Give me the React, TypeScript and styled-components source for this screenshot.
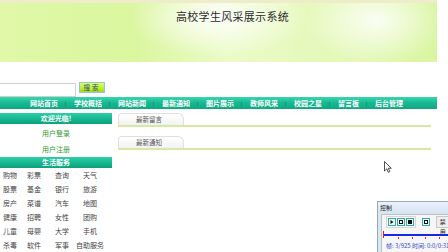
import React from 'react';
import styled, { createGlobalStyle } from 'styled-components';

const GlobalStyle = createGlobalStyle`
  html, body {
    margin: 0;
    padding: 0;
    background: #fff;
    overflow: hidden;
  }
  body {
    font-family: "Noto Sans CJK SC", "Liberation Sans", sans-serif;
  }
`;

const Page = styled.div`
  position: relative;
  width: 448px;
  height: 252px;
  overflow: hidden;
`;

const Banner = styled.header`
  width: 437px;
  height: 62px;
  border-top: 3px solid #efecc9;
  box-sizing: border-box;
  background:
    radial-gradient(ellipse 90px 40px at 50% 25%, rgba(255, 255, 255, 0.95), rgba(255, 255, 255, 0) 100%),
    radial-gradient(ellipse 70px 45px at 86% 30%, rgba(255, 255, 255, 0.85), rgba(255, 255, 255, 0) 100%),
    linear-gradient(90deg, #e0f8a8 0%, #daf69e 30%, #eafbc6 52%, #e4f8b8 78%, #d8f6a0 100%);
  display: flex;
  justify-content: center;
  padding-top: 6px;
`;

const Title = styled.h1`
  margin: 0 0 0 28px;
  font-size: 11px;
  font-weight: normal;
  letter-spacing: 0.3px;
  color: #2b2b2b;
  line-height: 14px;
`;

const SearchRow = styled.div`
  display: flex;
  align-items: flex-start;
  gap: 3px;
  margin-top: 20px;
  height: 15px;
`;

const SearchInput = styled.div`
  width: 78px;
  height: 14px;
  margin-left: -2px;
  margin-top: 1px;
  border: 1px solid #cfcfcf;
  box-sizing: border-box;
  background: #fff;
`;

const SearchButton = styled.button`
  width: 26px;
  height: 11px;
  padding: 0;
  border: 1px solid #8cc8dc;
  background: linear-gradient(180deg, #e0fb6c 0%, #bcec30 60%, #a6d81c 100%);
  font-family: inherit;
  font-size: 6.5px;
  line-height: 9px;
  color: #2a4a80;
  letter-spacing: 2px;
`;

const NavBar = styled.nav`
  width: 437px;
  height: 12px;
  background: linear-gradient(180deg, #3ad6ae 0%, #18bb93 45%, #0fa682 100%);
  display: flex;
  align-items: center;
  padding-left: 22px;
  box-sizing: border-box;
`;

const NavItem = styled.span<{ $last?: boolean }>`
  position: relative;
  padding: 0 8px;
  font-size: 7px;
  line-height: 12px;
  font-weight: bold;
  color: #fff;
  white-space: nowrap;

  &::after {
    content: '';
    display: ${({ $last }) => ($last ? 'none' : 'block')};
    position: absolute;
    right: 0;
    top: 5px;
    width: 1px;
    height: 4px;
    background: rgba(0, 95, 70, 0.35);
  }
`;

const Main = styled.div`
  display: flex;
  margin-top: 4px;
`;

const Side = styled.aside`
  width: 112px;
`;

const SideHeader = styled.div`
  height: 11px;
  background: linear-gradient(180deg, #2ccfa6 0%, #14b68e 55%, #0ea07e 100%);
  color: #fff;
  font-size: 7px;
  font-weight: bold;
  line-height: 11px;
  text-align: center;
`;

const UserLinks = styled.div`
  padding-top: 1px;
`;

const UserLink = styled.div`
  height: 16px;
  line-height: 16px;
  font-size: 7px;
  color: #2e9a2e;
  text-align: center;
`;

const ServiceGrid = styled.div`
  display: grid;
  grid-template-columns: 20px 28px 28px 28px;
  grid-auto-rows: 14px;
  justify-items: center;
  align-items: center;
`;

const ServiceItem = styled.span`
  font-size: 7px;
  color: #444;
  white-space: nowrap;
`;

const Content = styled.section`
  margin-left: 6px;
  width: 313px;
`;

const Panel = styled.div`
  margin-bottom: 9px;
`;

const Tab = styled.div`
  width: 66px;
  height: 12px;
  box-sizing: border-box;
  border: 1px solid #e0e0e0;
  border-bottom: none;
  border-radius: 4px 6px 0 0;
  background: linear-gradient(180deg, #ffffff 0%, #f2f2f2 100%);
  font-size: 6.5px;
  line-height: 11px;
  color: #555;
  text-align: center;
  padding-right: 4px;
`;

const TabLine = styled.div`
  height: 2px;
  background: #d6e8a4;
`;

const Cursor = styled.svg`
  position: absolute;
  left: 384px;
  top: 161px;
`;

const ControlWindow = styled.div`
  position: absolute;
  left: 377px;
  top: 201px;
  width: 80px;
  height: 60px;
  border: 1px solid #9aa8b8;
  background: #dbe6f3;
  box-sizing: border-box;
`;

const ControlTitle = styled.div`
  height: 12px;
  line-height: 12px;
  padding-left: 2px;
  font-size: 6px;
  color: #222;
  background: linear-gradient(180deg, #eaf1fa, #d6e3f2);
`;

const ControlBody = styled.div`
  margin-left: 3px;
  border: 1px solid #b8c2cc;
  background: #f6f6f6;
  height: 40px;
  padding: 1px 0 0 4px;
  box-sizing: border-box;
`;

const ButtonRow = styled.div`
  display: flex;
  align-items: center;
  gap: 6px;
`;

const ButtonGroup = styled.div`
  display: flex;
  gap: 1px;
  padding: 1px;
  border: 1px solid #d8d8d8;
`;

const CtrlButton = styled.div`
  width: 8px;
  height: 8px;
  box-sizing: border-box;
  border: 1px solid #3aa8a0;
  background: #e6f6f4;
  display: flex;
  align-items: center;
  justify-content: center;
`;

const TextButton = styled.div`
  height: 10px;
  padding: 0 3px;
  border: 1px solid #c8c8c8;
  background: #eee;
  font-size: 6px;
  line-height: 10px;
  color: #222;
`;

const Slider = styled.div`
  position: relative;
  height: 10px;
  margin: 2px 0 0 -3px;
`;

const SliderLine = styled.div`
  position: absolute;
  left: 0;
  right: 0;
  top: 4px;
  height: 2px;
  background: #1a28e6;
`;

const SliderThumb = styled.div`
  position: absolute;
  left: 0;
  top: 1px;
  width: 1px;
  height: 7px;
  background: #e02020;
`;

const SliderTick = styled.div`
  position: absolute;
  top: 7px;
  width: 1px;
  height: 2px;
  background: #e02020;
`;

const Status = styled.div`
  margin-top: 1px;
  font-size: 6px;
  line-height: 9px;
  color: #3a48c8;
  white-space: nowrap;
`;

const navItems = ['网站首页', '学校概括', '网站新闻', '最新通知', '图片展示', '教师风采', '校园之星', '留言板', '后台管理'];

const services = [
  '购物', '彩票', '查询', '天气',
  '股票', '基金', '银行', '旅游',
  '房产', '菜谱', '汽车', '地图',
  '健康', '招聘', '女性', '团购',
  '儿童', '母婴', '大学', '手机',
  '杀毒', '软件', '军事', '自助服务',
];

const Glyph: React.FC<{ kind: 'play' | 'square' | 'fill' }> = ({ kind }) => (
  <svg width="4" height="4" viewBox="0 0 4 4">
    {kind === 'play' && <path d="M0.5 0 L3.5 2 L0.5 4 Z" fill="#111" />}
    {kind === 'square' && <rect x="0.5" y="0.5" width="3" height="3" fill="none" stroke="#111" strokeWidth="1" />}
    {kind === 'fill' && <rect x="0" y="0" width="4" height="4" fill="#111" />}
  </svg>
);

export default function App() {
  return (
    <Page>
      <GlobalStyle />
      <Banner>
        <Title>高校学生风采展示系统</Title>
      </Banner>
      <SearchRow>
        <SearchInput />
        <SearchButton>搜索</SearchButton>
      </SearchRow>
      <NavBar>
        {navItems.map((item, i) => (
          <NavItem key={item} $last={i === navItems.length - 1}>
            {item}
          </NavItem>
        ))}
      </NavBar>
      <Main>
        <Side>
          <SideHeader>欢迎光临!</SideHeader>
          <UserLinks>
            <UserLink>用户登录</UserLink>
            <UserLink>用户注册</UserLink>
          </UserLinks>
          <SideHeader>生活服务</SideHeader>
          <ServiceGrid>
            {services.map((s) => (
              <ServiceItem key={s}>{s}</ServiceItem>
            ))}
          </ServiceGrid>
        </Side>
        <Content>
          <Panel>
            <Tab>最新留言</Tab>
            <TabLine />
          </Panel>
          <Panel>
            <Tab>最新通知</Tab>
            <TabLine />
          </Panel>
        </Content>
      </Main>

      <Cursor width="8" height="12" viewBox="0 0 8 12">
        <path d="M0.5 0.5 L0.5 10 L2.8 7.8 L4.4 11.3 L5.8 10.7 L4.3 7.3 L7.3 7.3 Z" fill="#fff" stroke="#222" strokeWidth="0.8" />
      </Cursor>

      <ControlWindow>
        <ControlTitle>控制</ControlTitle>
        <ControlBody>
          <ButtonRow>
            <ButtonGroup>
              <CtrlButton><Glyph kind="play" /></CtrlButton>
              <CtrlButton><Glyph kind="square" /></CtrlButton>
              <CtrlButton><Glyph kind="fill" /></CtrlButton>
            </ButtonGroup>
            <CtrlButton><Glyph kind="square" /></CtrlButton>
            <TextButton>禁用</TextButton>
          </ButtonRow>
          <Slider>
            <SliderLine />
            <SliderThumb />
            {[15, 29, 42, 56].map((x) => (
              <SliderTick key={x} style={{ left: x }} />
            ))}
          </Slider>
          <Status>帧: 3/925 时间: 0:0/0:31</Status>
        </ControlBody>
      </ControlWindow>
    </Page>
  );
}
